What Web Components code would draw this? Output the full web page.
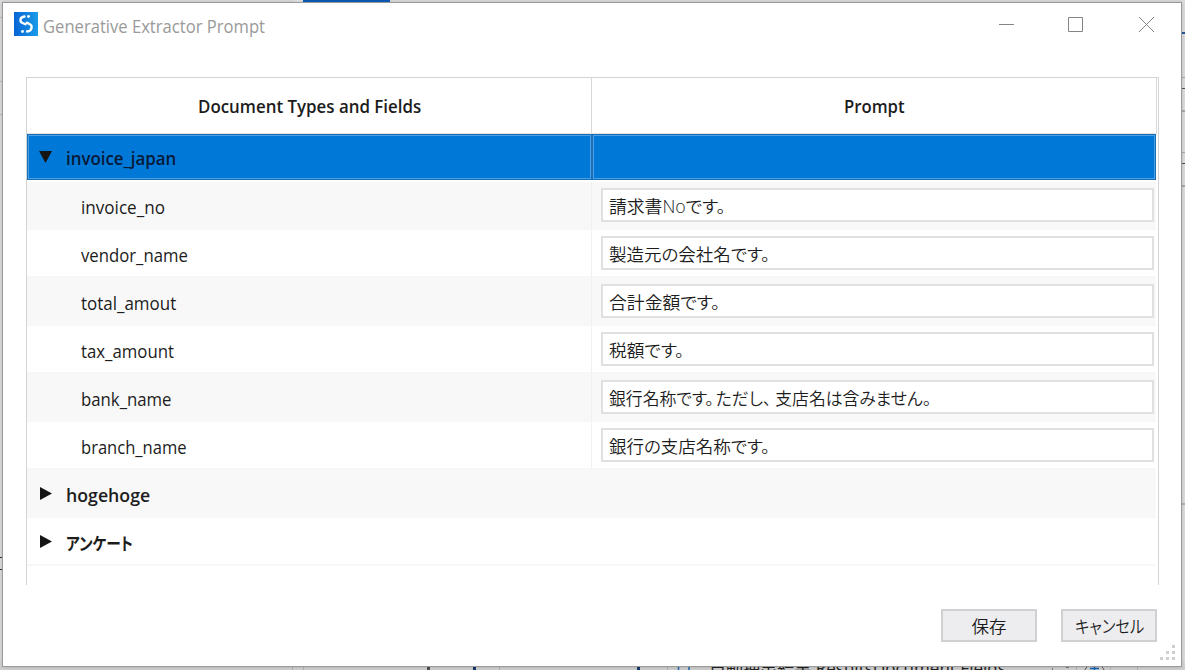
<!DOCTYPE html>
<html lang="ja">
<head>
<meta charset="utf-8">
<title>Generative Extractor Prompt</title>
<style>
html, body { margin: 0; width: 1185px; height: 670px; overflow: hidden; }
body { position: relative; background: #dedede; color: #1c1c1c; font: 17.5px "Open Sans", "Noto Sans CJK JP", sans-serif; }
.gap { margin: 0 4px 0 2px; }
</style>
</head>
<body>
<desktop-backdrop></desktop-backdrop>
<dialog-window>
  <title-bar slot="title"><fit-text width="222">Generative Extractor Prompt</fit-text></title-bar>
  <prompt-table>
    <table-head slot="head">
      <fit-text slot="left" width="223">Document Types and Fields</fit-text>
      <fit-text slot="right" width="61">Prompt</fit-text>
    </table-head>
    <group-row open selected><fit-text width="110">invoice_japan</fit-text></group-row>
    <field-row shaded><fit-text width="84">invoice_no</fit-text><fit-text slot="prompt" width="116">請求書Noです。</fit-text></field-row>
    <field-row><fit-text width="107">vendor_name</fit-text><fit-text slot="prompt" width="161">製造元の会社名です。</fit-text></field-row>
    <field-row shaded><fit-text width="95">total_amout</fit-text><fit-text slot="prompt" width="111">合計金額です。</fit-text></field-row>
    <field-row><fit-text width="93">tax_amount</fit-text><fit-text slot="prompt" width="75">税額です。</fit-text></field-row>
    <field-row shaded><fit-text width="91">bank_name</fit-text><fit-text slot="prompt" width="322">銀行名称です。<span class="gap">ただし、</span>支店名は含みません。</fit-text></field-row>
    <field-row><fit-text width="106">branch_name</fit-text><fit-text slot="prompt" width="161">銀行の支店名称です。</fit-text></field-row>
    <group-row shaded><fit-text width="84">hogehoge</fit-text></group-row>
    <group-row><fit-text width="67">アンケート</fit-text></group-row>
  </prompt-table>
  <push-button slot="actions"><fit-text width="35">保存</fit-text></push-button>
  <push-button slot="actions"><fit-text width="69">キャンセル</fit-text></push-button>
</dialog-window>

<script>
const define = (name, html, setup) => {
  const template = document.createElement('template');
  template.innerHTML = html;
  customElements.define(name, class extends HTMLElement {
    connectedCallback() {
      if (this.shadowRoot) return;
      this.attachShadow({ mode: 'open' }).append(template.content.cloneNode(true));
      if (setup) setup(this);
    }
  });
};

define('desktop-backdrop', `
<style>
:host { position: absolute; inset: 0; overflow: hidden; background: linear-gradient(#dedede 0 660px, #d0d0d0 667px); }
i { position: absolute; display: block; }
span { position: absolute; left: 709px; top: 656px; line-height: 24px; white-space: nowrap; color: #222; }
svg { position: absolute; left: 0; top: 660px; }
</style>
<span><fit-text width="297">自動抽出結果 ResultsDocument Fields</fit-text></span>
<svg width="1185" height="10" fill="none">
  <path d="M292.5 0v10M303.5 0v10M499.5 0v10M667.5 0v10M1076.5 0v10M1110.5 0v10M1137.5 0v10" stroke="#b4b4b4"/>
  <path d="M428.5 0v10" stroke="#505050" stroke-width="3"/>
  <path d="M474.5 0v10M638.5 0v10" stroke="#173a68" stroke-width="3"/>
  <path d="M678.5 0v10M689 0v10" stroke="#1c68b5" stroke-width="1.5"/>
  <path d="M1052.5 8v2M1066 7.500h3" stroke="#777"/>
  <path d="M1094.500 4v6M1090 8.500h9" stroke="#1261b0" stroke-width="1.500"/>
  <path d="M1087 7q-2 2-2 3M1102 7q2 2 2 3" stroke="#555"/>
</svg>`, el => {
  // x, y, width, height, colour of the slivers visible around the window
  [[303,0,87,3,'#0b5cb8'],[293,0,10,2,'#e6e6e6'],[0,17,2,1,'#c4bac0'],[0,81,2,1,'#b9b9b9'],[0,114,2,1,'#b9b9b9'],
   [0,557,2,1,'#333'],[0,569,2,1,'#333'],[1182,32,3,2,'#235a9e'],[1182,77,3,1,'#aaa'],[1182,88,3,1,'#555'],
   [1182,110,3,2,'#aaa'],[1182,152,3,1,'#aaa'],[1182,163,3,1,'#555'],[1182,185,3,2,'#aaa'],[1182,503,3,2,'#b5b5b5']
  ].forEach(([x,y,w,h,c]) => {
    const i = document.createElement('i');
    i.style.cssText = `left:${x}px;top:${y}px;width:${w}px;height:${h}px;background:${c}`;
    el.shadowRoot.append(i);
  });
});

define('dialog-window', `
<style>
:host { position: absolute; left: 2px; top: 2px; width: 1180px; height: 665px; box-sizing: border-box;
  border: 1px solid #9b9b9b; background: #fff; display: flex; flex-direction: column; box-shadow: 0 0 4px #0003; }
main { margin: 29px 0 0 23px; height: 508px; display: flex; }
footer { display: flex; justify-content: flex-end; gap: 24px; padding: 24px 24px 0 0; }
svg { position: absolute; right: 5px; bottom: 5px; }
</style>
<slot name="title"></slot>
<main><slot></slot></main>
<footer><slot name="actions"></slot></footer>
<svg width="16" height="16" fill="#cfcfcf"><path d="M12 0h3v3h-3zM12 6h3v3h-3zM12 12h3v3h-3zM6 6h3v3h-3zM6 12h3v3h-3zM0 12h3v3h-3z"/></svg>`);

define('title-bar', `
<style>
:host { display: flex; align-items: center; height: 45px; color: #9a9a9a; padding-left: 11px; flex: none; }
.logo { display: block; margin: -3px 5px 0 0; }
.tools { margin-left: auto; display: block; }
slot { display: block; }
</style>
<svg class="logo" width="24" height="24" viewBox="0 0 24 24" fill="none">
  <defs><linearGradient id="g" x2="1"><stop stop-color="#0865d5"/><stop offset="1" stop-color="#1a9be8"/></linearGradient></defs>
  <path fill="url(#g)" d="M0 0h24v24H0z"/>
  <path d="M10.500 4.500C5.500 5 5.500 9.800 8.500 11L11.500 12.200M13 19.500C18.500 19 18.500 13.500 16 12.200L12.800 10.600" stroke="#fff" stroke-width="2.300" stroke-linecap="round"/>
  <circle cx="14.500" cy="4.500" r="1.400" fill="#fff"/><circle cx="8.500" cy="19.500" r="1.400" fill="#fff"/>
</svg>
<slot></slot>
<svg class="tools" width="184" height="45" fill="none" stroke="#858585"><path d="M2 21.500h15M71.500 14.500h14v14h-14zM142 14l15 15M157 14l-15 15"/></svg>`);

define('prompt-table', `
<style>
:host { display: block; box-sizing: border-box; width: 1133px; height: 508px; border: 1px solid #d4d4d4; border-bottom: 0; }
</style><slot name="head"></slot><slot></slot>`);

define('table-head', `
<style>
:host { display: grid; grid-template-columns: 565px 565px; height: 56px; box-sizing: border-box; border-bottom: 1px solid #e2e2e2; font-weight: 600; width: 1130px; }
div { display: flex; align-items: center; justify-content: center; border-right: 1px solid #d8d8d8; padding-top: 1px; }
</style>
<div><slot name="left"></slot></div><div><slot name="right"></slot></div>`);

define('group-row', `
<style>
:host { display: grid; grid-template-columns: 565px 564px; height: 48px; font-weight: 600; background: #fff; width: 1129px; }
:host([shaded]) { background: #f8f8f8; }
div { display: flex; align-items: center; border-bottom: 2px solid #f7f7f7; box-sizing: border-box; padding: 3px 0 0 12px; }
div:first-child { border-right: 1px solid #f0f0f0; }
svg { width: 15px; height: 15px; margin: -3px 12px 0 0; fill: #151515; }
:host([open]) svg { transform: translate(-1px, 1px) rotate(90deg); }
:host([selected]) { color: #071a38; }
:host([selected]) div { height: 46px; background: #0078d7; border: 1px solid #1a70b8; box-shadow: inset 0 0 0 1px #4b9fe2; padding: 2px 0 0 11px; }
:host([selected]) div:first-child { margin-right: 1px; }
</style>
<div><svg viewBox="0 0 15 15"><path d="M1 1l12 6.500-12 6.500z"/></svg><slot></slot></div><div></div>`);

define('field-row', `
<style>
:host { display: grid; grid-template-columns: 565px 564px; height: 48px; background: #fff; width: 1129px; }
:host([shaded]) { background: #f8f8f8; }
div { display: flex; align-items: center; border-bottom: 2px solid #f7f7f7; box-sizing: border-box; }
.name { padding: 3px 0 0 54px; border-right: 1px solid #f0f0f0; }
.cell { padding: 0 2px 0 9px; font-weight: 350; }
.box { display: flex; align-items: center; height: 34px; flex: 1; border: 2px solid #e0e0e0; background: #fff; padding: 1px 0 0 6px; box-sizing: border-box; }
</style>
<div class="name"><slot></slot></div>
<div class="cell"><span class="box"><slot name="prompt"></slot></span></div>`);

define('push-button', `
<style>
:host { display: flex; align-items: center; justify-content: center; width: 96px; height: 33px; box-sizing: border-box;
  border: 2px solid #d0d0d2; background: #ededf0; font-weight: 350; }
</style><slot></slot>`);

// A one-line label drawn at a given advance width.
define('fit-text', `
<style>
:host { display: block; white-space: nowrap; line-height: 24px; font-feature-settings: "palt"; }
span { display: inline-block; transform-origin: 0 50%; }
</style><span><slot></slot></span>`, el => {
  const span = el.shadowRoot.querySelector('span');
  const width = +el.getAttribute('width');
  span.style.transform = `scaleX(${width / span.offsetWidth})`;
  el.style.width = width + 'px';
});
</script>
</body>
</html>
